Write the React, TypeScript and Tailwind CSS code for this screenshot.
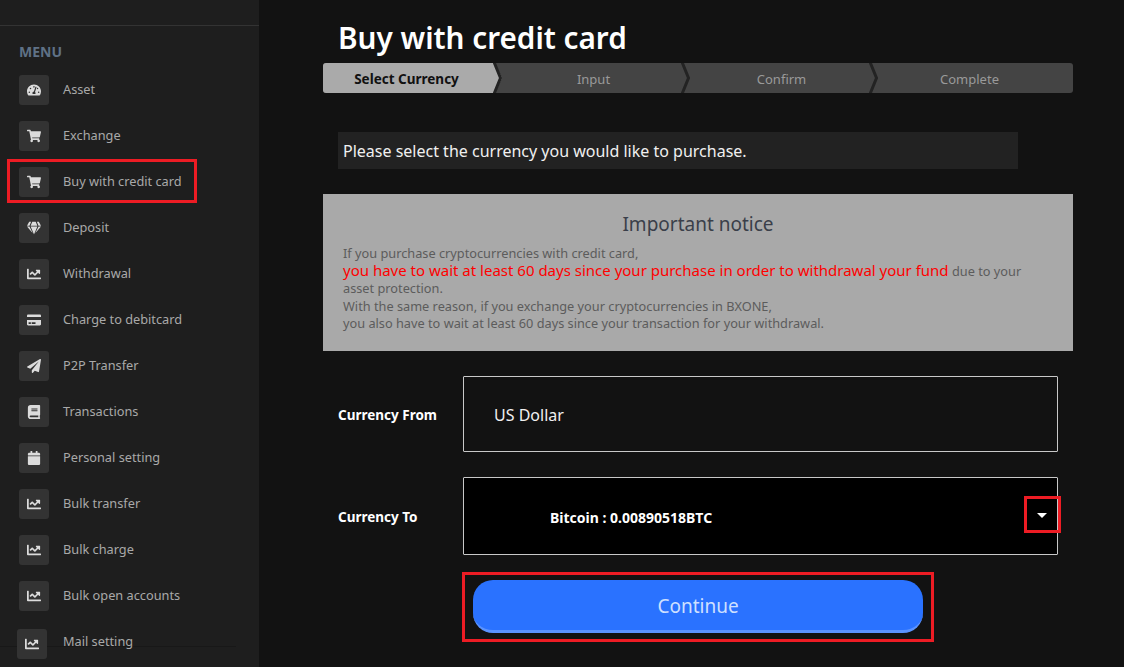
import { FaTachometerAlt, FaShoppingCart, FaGem, FaChartLine, FaCreditCard, FaPaperPlane, FaBook, FaCalendar } from "react-icons/fa";
import { ReactNode } from "react";

const menu: { label: string; icon: ReactNode }[] = [
  { label: "Asset", icon: <FaTachometerAlt /> },
  { label: "Exchange", icon: <FaShoppingCart /> },
  { label: "Buy with credit card", icon: <FaShoppingCart /> },
  { label: "Deposit", icon: <FaGem /> },
  { label: "Withdrawal", icon: <FaChartLine /> },
  { label: "Charge to debitcard", icon: <FaCreditCard /> },
  { label: "P2P Transfer", icon: <FaPaperPlane /> },
  { label: "Transactions", icon: <FaBook /> },
  { label: "Personal setting", icon: <FaCalendar /> },
  { label: "Bulk transfer", icon: <FaChartLine /> },
  { label: "Bulk charge", icon: <FaChartLine /> },
  { label: "Bulk open accounts", icon: <FaChartLine /> },
];

const steps = ["Select Currency", "Input", "Confirm", "Complete"];

const Chevron = () => (
  <svg className="absolute right-[-9px] top-0 z-10 h-[30px] w-[12px]" viewBox="0 0 12 30">
    <path d="M1 -1 L7.5 15 L1 31" fill="none" stroke="#232323" strokeWidth="3" />
  </svg>
);

const Sidebar = () => (
  <aside className="relative h-full w-[259px] shrink-0 overflow-hidden bg-[#1e1e1e]">
    {/* faint rule behind the last row */}
    <div className="absolute left-0 top-[646px] h-px w-[236px] bg-[#181818]" />
    <div className="relative mt-[25px] border-t border-[#333333] pl-[19px] pt-[16px]">
      <div className="h-[33px] text-[14px] font-bold leading-[20px] text-[#5f7186]">MENU</div>
      <ul className="flex flex-col gap-4">
        {menu.map((item) => (
          <li key={item.label} className="flex h-[30px] items-center gap-[14px]">
            <span className="flex h-[30px] w-[30px] items-center justify-center rounded-[3px] bg-[#333333] text-[14px] text-[#dcdcdc]">
              {item.icon}
            </span>
            <span className="text-[12.75px] text-[#a9a9a9]">{item.label}</span>
          </li>
        ))}
        <li className="flex h-[30px] items-center gap-[14px]">
          <span className="ml-[-2px] mr-[2px] flex h-[30px] w-[30px] translate-y-[2px] items-center justify-center rounded-[3px] bg-[#333333] text-[14px] text-[#dcdcdc]">
            <FaChartLine />
          </span>
          <span className="text-[12.75px] text-[#a9a9a9]">Mail setting</span>
        </li>
      </ul>
    </div>
    {/* red highlight drawn over the screenshot */}
    <div className="absolute left-[7px] top-[159px] h-[44px] w-[190px] border-[3px] border-[#ed1c24]" />
  </aside>
);

const Stepper = () => (
  <div className="flex h-[30px] w-[750px] overflow-hidden rounded-[3px] bg-[#444444]">
    {steps.map((step, i) => (
      <div
        key={step}
        className={
          i === 0
            ? "relative flex h-full w-[173px] items-center justify-center pr-[6px] pt-[3px] text-[13.5px] font-bold text-[#111111]"
            : "relative flex h-full w-[188px] items-center justify-center pl-[7px] pt-[3px] text-[13px] text-[#9a9a9a]"
        }
      >
        {i === 0 && (
          <span className="absolute inset-y-0 left-0 w-[179px] bg-[#aaaaaa] [clip-path:polygon(0_0,172px_0,179px_50%,172px_100%,0_100%)]" />
        )}
        <span className="relative">{step}</span>
        {i < 3 && <Chevron />}
      </div>
    ))}
  </div>
);

const App = () => {
  return (
    <div className="flex h-[667px] w-[1124px] overflow-hidden bg-[#121212] font-['Noto_Sans','Open_Sans',sans-serif]">
      <Sidebar />
      <main className="relative flex-1 pl-[64px]">
        <h1 className="ml-[15px] pt-[16px] text-[29.7px] font-semibold leading-[44px] text-white">Buy with credit card</h1>
        <div className="mt-[3px]">
          <Stepper />
        </div>
        <p className="ml-[15px] mt-[39px] h-[37px] w-[680px] bg-[#222222] pl-[5px] pt-[1px] text-[16px] leading-[37px] text-[#f0f0f0]">
          Please select the currency you would like to purchase.
        </p>
        <section className="mt-[25px] h-[157px] w-[750px] bg-[#a9a9a9] px-[20px] pt-[16px]">
          <h2 className="text-center text-[19px] font-normal leading-[28px] text-[#3a3f4a]">Important notice</h2>
          <p className="mt-[7px] text-[12.75px] leading-[17.5px] text-[#5c5c5c]">
            If you purchase cryptocurrencies with credit card,
            <br />
            <span className="text-[15px] leading-[15px] text-[#ff0000]">
              you have to wait at least 60 days since your purchase in order to withdrawal your fund
            </span>{" "}
            due to your asset protection.
            <br />
            With the same reason, if you exchange your cryptocurrencies in BXONE,
            <br />
            you also have to wait at least 60 days since your transaction for your withdrawal.
          </p>
        </section>
        <div className="ml-[15px] mt-[25px] flex items-center">
          <label className="w-[110px] pt-[3px] text-[13.5px] font-bold text-white">Currency From</label>
          <div className="ml-[15px] flex h-[76px] w-[595px] items-center rounded-[1px] border border-[#c8c8c8] pl-[30px] pt-[2px] text-[16px] text-[#f0f0f0]">
            US Dollar
          </div>
        </div>
        <div className="ml-[15px] mt-[25px] flex items-center">
          <label className="w-[110px] pt-[3px] text-[13.5px] font-bold text-white">Currency To</label>
          <div className="relative ml-[15px] flex h-[78px] w-[595px] items-center rounded-[1px] border border-[#c8c8c8] bg-black pl-[86px] pt-[3px] text-[14px] font-bold text-white">
            Bitcoin : 0.00890518BTC
            <svg className="absolute right-[10px] top-[35px] h-[5px] w-[10px]" viewBox="0 0 10 5">
              <path d="M0 0 H10 L5 5 Z" fill="#ffffff" />
            </svg>
            <div className="absolute right-[-4px] top-[18px] h-[37px] w-[37px] border-[3px] border-[#ed1c24]" />
          </div>
        </div>
        <div className="ml-[139px] mt-[17px] h-[70px] w-[472px] border-[3px] border-[#ed1c24] px-[8px] pt-[5px]">
          <button className="h-[53px] w-full rounded-[20px] border-b-[3px] border-[#5b93ff] bg-[#2a72ff] pt-[2px] text-[19px] text-[#cfe0ff]">
            Continue
          </button>
        </div>
      </main>
    </div>
  );
};

export default App;
